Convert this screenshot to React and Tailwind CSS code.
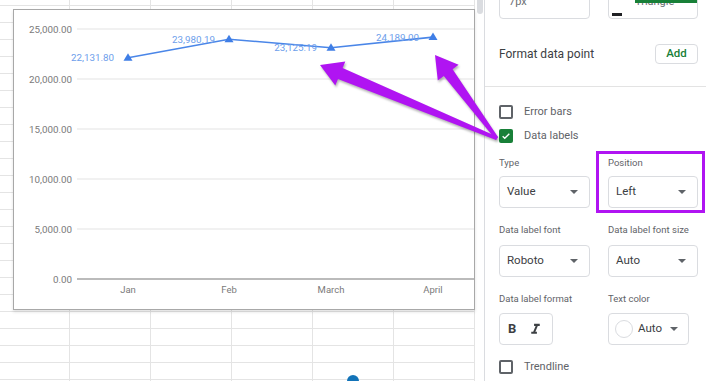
import React from 'react';

const yTicks = [
    { label: '25,000.00', y: 29 },
    { label: '20,000.00', y: 79 },
    { label: '15,000.00', y: 129 },
    { label: '10,000.00', y: 179 },
    { label: '5,000.00', y: 229 },
];

const points = [
    { month: 'Jan', x: 128, value: 22131.8, label: '22,131.80' },
    { month: 'Feb', x: 229, value: 23980.19, label: '23,980.19' },
    { month: 'March', x: 331, value: 23125.19, label: '23,125:19' },
    { month: 'April', x: 433, value: 24189, label: '24,189.00' },
];

const yOf = (v) => 279 - v / 100;

const Caret = () => (
    <svg width="8" height="4" viewBox="0 0 8 4">
        <path d="M0 0h8L4 4z" fill="#5f6368" />
    </svg>
);

const Dropdown = ({ children }) => (
    <div className="flex h-[32px] items-center justify-between rounded-[4px] border border-[#dadce0] pl-[7px] pr-[11px] text-[11.5px] text-[#3c4043]">
        <span>{children}</span>
        <Caret />
    </div>
);

const Checkbox = ({ checked, label }) => (
    <div className="flex h-[14px] items-center gap-[11px]">
        {checked ? (
            <div className="flex h-[14px] w-[14px] items-center justify-center rounded-[2px] bg-[#188038]">
                <svg width="10" height="10" viewBox="0 0 24 24">
                    <path d="M4 12.5l5 5L20 6.5" fill="none" stroke="#fff" strokeWidth="3.2" />
                </svg>
            </div>
        ) : (
            <div className="h-[14px] w-[14px] rounded-[2px] border-2 border-[#5f6368]" />
        )}
        <span className="text-[11px] text-[#5f6368]">{label}</span>
    </div>
);

const Chart = () => (
    <div className="absolute left-[13px] top-[9px] h-[301px] w-[462px] border border-[#a8a8a8] bg-white shadow-[0_2px_3px_rgba(0,0,0,0.12)]">
        <svg width="460" height="299" className="block">
            <g transform="translate(-14 -10)" fontFamily="Roboto, sans-serif">
                {yTicks.map((t) => (
                    <g key={t.label}>
                        <line x1="77" x2="476" y1={t.y} y2={t.y} stroke="#e3e3e3" strokeWidth="1.2" />
                        <text x="72" y={t.y + 3.5} textAnchor="end" fontSize="9.8" fill="#7a7a7a">{t.label}</text>
                    </g>
                ))}
                <line x1="77" x2="476" y1="279" y2="279" stroke="#a4a4a4" strokeWidth="1.5" />
                <text x="72" y="282.5" textAnchor="end" fontSize="9.8" fill="#7a7a7a">0.00</text>
                {points.map((p) => (
                    <text key={p.month} x={p.x} y="293" textAnchor="middle" fontSize="9.5" fill="#7a7a7a">{p.month}</text>
                ))}
                <polyline
                    points={points.map((p) => `${p.x},${yOf(p.value)}`).join(' ')}
                    fill="none"
                    stroke="#4a86e8"
                    strokeWidth="1.6"
                />
                {points.map((p) => {
                    const y = yOf(p.value);
                    return (
                        <g key={p.label}>
                            <polygon points={`${p.x},${y - 4.5} ${p.x + 4.5},${y + 3} ${p.x - 4.5},${y + 3}`} fill="#3f7ee6" />
                            <text x={p.x - 14} y={y + 3.5} textAnchor="end" fontSize="9.8" fill="#6d9eeb">{p.label}</text>
                        </g>
                    );
                })}
            </g>
        </svg>
    </div>
);

const App = () => {
    return (
        <div className="relative flex h-[381px] w-[706px] overflow-hidden bg-white font-[Roboto,sans-serif]">
            {/* Sheet grid with the chart */}
            <div className="relative h-full w-[475px] bg-white bg-[linear-gradient(to_bottom,#e4e4e4_1px,transparent_1px),linear-gradient(to_right,#e4e4e4_1px,transparent_1px)] bg-size-[81px_17px] bg-position-[69px_5px]">
                <Chart />
                <div className="absolute left-[347px] top-[375px] h-[12px] w-[12px] rounded-full bg-[#1273b8]" />
            </div>

            {/* Scrollbar */}
            <div className="h-full w-[9px] bg-white pl-[2px]">
                <div className="h-[14px] w-[6px] rounded-b-[3px] bg-[#dadce0]" />
            </div>

            {/* Side panel */}
            <div className="relative flex h-full w-[222px] flex-col border-l border-[#dadce0] bg-white pl-[14px]">
                <div className="-mt-[15px] grid grid-cols-[91px_90px] gap-x-[18px]">
                    <div className="flex h-[34px] items-center rounded-[4px] border border-[#dadce0] pl-[9px] text-[11px] text-[#6b6f73]">
                        7px
                    </div>
                    <div className="relative flex h-[34px] items-center rounded-[4px] border border-[#dadce0] pl-[3px] text-[11px] text-[#6b6f73]">
                        <div className="mb-[2px] h-[3px] w-[10px] self-end bg-[#202124]" />
                        <span className="ml-[13px]">Triangle</span>
                        <div className="absolute left-[26px] top-[14px] h-[3px] w-[62px] bg-[#188038]" />
                    </div>
                </div>

                <div className="mt-[25px] flex h-[20px] items-center justify-between pr-[8px]">
                    <span className="text-[12px] text-[#3c4043]">Format data point</span>
                    <div className="flex h-[20px] w-[43px] items-center justify-center rounded-[4px] border border-[#dadce0] text-[11.5px] font-medium text-[#188038]">
                        Add
                    </div>
                </div>

                <div className="-ml-[14px] mt-[22px] h-px bg-[#e3e3e3]" />

                <div className="mt-[18px]">
                    <Checkbox label="Error bars" />
                </div>
                <div className="mt-[10px]">
                    <Checkbox checked label="Data labels" />
                </div>

                <div className="mt-[13px] grid grid-cols-[91px_90px] gap-x-[18px] text-[9.5px] leading-[14px] text-[#5f6368]">
                    <span>Type</span>
                    <span>Position</span>
                </div>
                <div className="mt-[6px] grid grid-cols-[91px_90px] gap-x-[18px]">
                    <Dropdown>Value</Dropdown>
                    <Dropdown>Left</Dropdown>
                </div>

                <div className="mt-[15px] grid grid-cols-[91px_90px] gap-x-[18px] text-[9.5px] leading-[14px] text-[#5f6368]">
                    <span>Data label font</span>
                    <span>Data label font size</span>
                </div>
                <div className="mt-[8px] grid grid-cols-[91px_90px] gap-x-[18px]">
                    <Dropdown>Roboto</Dropdown>
                    <Dropdown>Auto</Dropdown>
                </div>

                <div className="mt-[15px] grid grid-cols-[91px_90px] gap-x-[18px] text-[9.5px] leading-[14px] text-[#5f6368]">
                    <span>Data label format</span>
                    <span>Text color</span>
                </div>
                <div className="mt-[7px] grid grid-cols-[91px_90px] gap-x-[18px]">
                    <div className="flex h-[32px] w-[54px] items-center rounded-[4px] border border-[#dadce0] pl-[8px] text-[#3c4043]">
                        <span className="text-[13px] font-bold">B</span>
                        <svg width="17" height="17" viewBox="0 0 24 24" className="ml-[11px]">
                            <path d="M10 4v3h2.21l-3.42 8H6v3h8v-3h-2.21l3.42-8H18V4z" fill="#3c4043" />
                        </svg>
                    </div>
                    <div className="flex h-[32px] w-[81px] items-center rounded-[4px] border border-[#dadce0] pl-[6px] pr-[10px] text-[11.5px] text-[#3c4043]">
                        <div className="h-[18px] w-[18px] rounded-full border border-[#dadce0] bg-white" />
                        <span className="ml-[5px] flex-1">Auto</span>
                        <Caret />
                    </div>
                </div>

                <div className="mt-[15px]">
                    <Checkbox label="Trendline" />
                </div>

                {/* Highlight around Position */}
                <div className="absolute left-[111px] top-[151px] h-[62px] w-[109px] border-[3px] border-[#b014f2]" />
            </div>

            {/* Annotation arrows */}
            <svg className="pointer-events-none absolute left-0 top-0 drop-shadow-[1px_2px_1px_rgba(0,0,0,0.3)]" width="706" height="381">
                <polygon
                    points="320,65 345.3,61.4 342.6,67.9 498,137 496,140 338,78.9 335.3,85.4"
                    fill="#b014f2"
                />
                <polygon
                    points="435,55 458.6,64.8 452.6,69.3 498,137 496,140 443.8,75.9 437.8,80.4"
                    fill="#b014f2"
                />
            </svg>
        </div>
    );
};

export default App;
